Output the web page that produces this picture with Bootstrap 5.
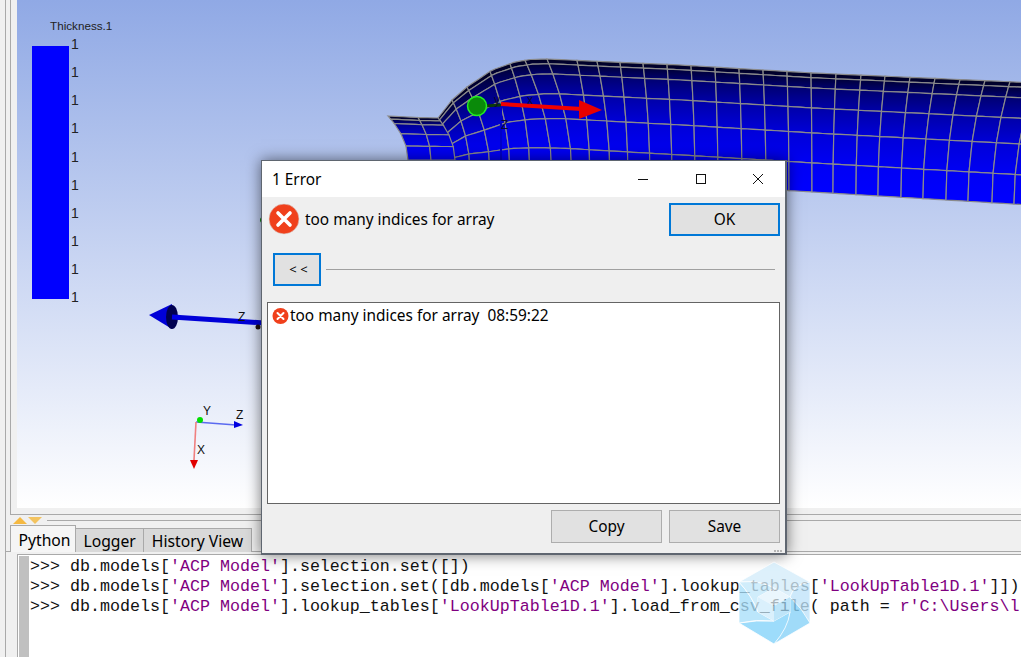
<!DOCTYPE html>
<html lang="en">
<head>
    <meta charset="UTF-8">
    <meta name="viewport" content="width=device-width, initial-scale=1.0">
    <title>1 Error</title>
    <link href="https://cdn.jsdelivr.net/npm/bootstrap@5.3.0/dist/css/bootstrap.min.css" rel="stylesheet">
    <style>
        html, body { height: 100%; overflow: hidden; }
        body {
            background-color: #f0f0f0;
            font-family: "Noto Sans", "Liberation Sans", sans-serif;
            font-size: 15.4px;
            color: #000;
            position: relative;
        }
        .app-shell { height: 657px; margin-left: 5px; border-left: 1px solid #a9a9a9; }
        .view-frame { margin-left: 4px; border-left: 1px solid #a9a9a9; border-bottom: 1px solid #a9a9a9; padding: 0 0 6px 6px; }
        .view-port {
            height: 508px;
            background: linear-gradient(to bottom, #90a9e5 0%, #ffffff 100%);
            overflow: hidden;
        }
        .view-port svg { display: block; }
        .split-row { height: 10px; padding-left: 7px; gap: 1px; }
        .split-line { height: 1px; background-color: #a9a9a9; margin-left: 4px; }
        .tri-up { width: 0; height: 0; border: 7px solid transparent; border-top: 0; border-bottom: 7px solid #f5b942; }
        .tri-down { width: 0; height: 0; border: 7px solid transparent; border-bottom: 0; border-top: 7px solid #f3c35f; }
        .tab-strip { height: 27px; padding-left: 4px; border-bottom: 1px solid #a9a9a9; margin-bottom: 2px; }
        .tab-item {
            border: 1px solid #a9a9a9;
            border-bottom: 0;
            background-color: #d9d9d9;
            padding: 0 7.5px;
            height: 24px;
            line-height: 24px;
            margin-top: 3px;
            font-size: 15.7px;
            white-space: nowrap;
        }
        .tab-item + .tab-item { border-left: 0; }
        .tab-item.tab-on { background-color: #f5f5f5; height: 27px; margin-top: 0; margin-bottom: -1px; line-height: 29px; position: relative; z-index: 1; width: 66px; }
        .console-box {
            height: 103px;
            margin-left: 11px;
            background-color: #fff;
            border-top: 1px solid #a9a9a9;
            border-left: 1px solid #a9a9a9;
            overflow: hidden;
        }
        .console-gutter { width: 10px; margin: 1px 1px 0 1px; background-color: #c0c0c0; flex: none; }
        .console-text {
            font-family: "Liberation Mono", monospace;
            font-size: 16.67px;
            line-height: 20px;
            white-space: pre;
            padding-top: 2px;
            color: #111;
        }
        .str-lit { color: #800080; }
        .err-dialog {
            position: absolute;
            left: 261px;
            top: 160px;
            width: 526px;
            height: 395px;
            background-color: #efefef;
            border: 2px solid #5f6670;
            border-top-width: 1px;
            border-left-width: 1px;
            box-shadow: 0 0 14px rgba(0, 0, 0, .55);
        }
        .err-title { height: 36px; background-color: #fff; padding: 1px 0 0 10px; }
        .win-btns { margin-right: -2px; margin-top: -1px; }
        .win-btn { width: 57.5px; height: 36px; }
        .err-head { height: 50px; padding: 6px 5px 0 6px; }
        .err-msg { margin-left: 5px; margin-top: 5px; }
        .err-btn {
            background-color: #e1e1e1;
            border: 1px solid #adadad;
            border-radius: 0;
            color: #000;
            font-size: 15.4px;
            width: 111px;
            height: 33px;
            padding: 0;
        }
        .err-btn.btn-focus { border: 2px solid #0078d7; }
        .err-btn.btn-less { width: 48px; font-size: 13px; padding: 1px 0 0 3px; }
        .err-rule { height: 1px; background-color: #a0a0a0; margin-left: 5px; margin-right: 5px; }
        .err-more { height: 33px; padding: 0 5px 0 11px; margin-top: 6px; }
        .err-list {
            height: 202px;
            margin: 16px 5px 0 5px;
            background-color: #fff;
            border: 1px solid #646464;
            padding: 1px 4px;
        }
        .err-list svg { margin-top: 3px; }
        .err-foot { padding: 6px 5px 0 0; gap: 7px; }
        .err-grip { position: absolute; right: 3px; bottom: 1px; width: 8px; height: 2px; background: repeating-linear-gradient(to right, #b5b5b5 0 2px, transparent 2px 3px); }
        .mark-over { position: absolute; left: 738px; top: 561px; pointer-events: none; }
    </style>
</head>
<body>
    <div class="app-shell d-flex flex-column">
        <div class="view-frame">
            <div class="view-port">
                <svg id="scene" width="1004" height="508" viewBox="17 0 1004 508" font-family="Liberation Sans, sans-serif">
                    <defs id="scene-defs"></defs>
                    <!-- legend -->
                    <text x="50" y="30" font-size="11.7" fill="#222">Thickness.1</text>
                    <rect x="32" y="46" width="37" height="253" fill="#0000ff"></rect>
                    <g id="legend-ticks" font-size="14" fill="#222"></g>
                    <!-- mesh goes in here -->
                    <g id="mesh"></g>
                    <!-- part triad -->
                    <line x1="501" y1="105" x2="501" y2="165" stroke="#0000c8" stroke-width="2"></line>
                    <line x1="484" y1="106" x2="501" y2="105" stroke="#0a3a0a" stroke-width="3"></line>
                    <line x1="501" y1="104" x2="582" y2="109" stroke="#f00000" stroke-width="4"></line>
                    <polygon points="579,100 602,110 579,119" fill="#e80000"></polygon>
                    <circle cx="477" cy="106" r="9.5" fill="#0a8a0a" stroke="#22ee22" stroke-width="1.5"></circle>
                    <g font-size="12" fill="#0a0a30">
                        <text x="494" y="104">y</text>
                        <text x="527" y="104">x</text>
                        <text x="501" y="129">Z</text>
                    </g>
                    <!-- big z arrow -->
                    <line x1="172" y1="317" x2="264" y2="323" stroke="#0000d8" stroke-width="5"></line>
                    <polygon points="149,315 172,304 172,329" fill="#0000d8"></polygon>
                    <ellipse cx="172" cy="317" rx="6" ry="12" fill="#000050"></ellipse>
                    <line x1="172" y1="317" x2="180" y2="317.5" stroke="#0000e8" stroke-width="5"></line>
                    <text x="238" y="321" font-size="12" fill="#111">Z</text>
                    <circle cx="258" cy="327" r="2.5" fill="#201010"></circle>
                    <circle cx="263" cy="220" r="3" fill="#0a8a0a"></circle>
                    <!-- corner triad -->
                    <line x1="196" y1="422" x2="236" y2="425" stroke="#5a6af0" stroke-width="1.6"></line>
                    <polygon points="234,421 243,425 234,428" fill="#0000e0"></polygon>
                    <line x1="196" y1="422" x2="194" y2="460" stroke="#f08080" stroke-width="1.6"></line>
                    <polygon points="190,460 198,460 194,469" fill="#e00000"></polygon>
                    <circle cx="200" cy="420" r="3" fill="#00e000"></circle>
                    <g font-size="12" fill="#111">
                        <text x="203" y="415">Y</text>
                        <text x="236" y="419">Z</text>
                        <text x="197" y="454">X</text>
                    </g>
                </svg>
            </div>
        </div>

        <div class="split-row d-flex align-items-center">
            <div class="tri-up"></div>
            <div class="tri-down"></div>
            <div class="split-line flex-grow-1"></div>
        </div>

        <div class="tab-strip d-flex">
            <div class="tab-item tab-on">Python</div>
            <div class="tab-item">Logger</div>
            <div class="tab-item">History View</div>
        </div>

        <div class="console-box d-flex flex-grow-1">
            <div class="console-gutter"></div>
            <div class="console-text">&gt;&gt;&gt; db.models[<span class="str-lit">'ACP Model'</span>].selection.set([])
&gt;&gt;&gt; db.models[<span class="str-lit">'ACP Model'</span>].selection.set([db.models[<span class="str-lit">'ACP Model'</span>].lookup_tables[<span class="str-lit">'LookUpTable1D.1'</span>]])
&gt;&gt;&gt; db.models[<span class="str-lit">'ACP Model'</span>].lookup_tables[<span class="str-lit">'LookUpTable1D.1'</span>].load_from_csv_file( path = <span class="str-lit">r'C:\Users\l</span></div>
        </div>
    </div>

    <!-- error dialog -->
    <div class="err-dialog">
        <div class="err-title d-flex align-items-center justify-content-between">
            <span>1 Error</span>
            <div class="win-btns d-flex">
                <div class="win-btn d-flex align-items-center justify-content-center">
                    <svg width="12" height="12" viewBox="0 0 12 12"><line x1="1" y1="6.5" x2="11" y2="6.5" stroke="#111" stroke-width="1"></line></svg>
                </div>
                <div class="win-btn d-flex align-items-center justify-content-center">
                    <svg width="12" height="12" viewBox="0 0 12 12"><rect x="1.5" y="1.5" width="9" height="9" fill="none" stroke="#111" stroke-width="1"></rect></svg>
                </div>
                <div class="win-btn d-flex align-items-center justify-content-center">
                    <svg width="12" height="12" viewBox="0 0 12 12"><path d="M1 1 L11 11 M11 1 L1 11" stroke="#111" stroke-width="1"></path></svg>
                </div>
            </div>
        </div>

        <div class="err-head d-flex align-items-start">
            <svg width="32" height="32" viewBox="0 0 32 32">
                <circle cx="16" cy="16" r="15" fill="#f0401c" stroke="#d8d0cc" stroke-width=".6"></circle>
                <path d="M10 10 L22 22 M22 10 L10 22" stroke="#fff" stroke-width="3.6" stroke-linecap="round"></path>
            </svg>
            <span class="err-msg flex-grow-1">too many indices for array</span>
            <button class="btn err-btn btn-focus">OK</button>
        </div>

        <div class="err-more d-flex align-items-center">
            <button class="btn err-btn btn-less btn-focus">&lt; &lt;</button>
            <div class="err-rule flex-grow-1"></div>
        </div>

        <div class="err-list d-flex align-items-start">
            <svg width="18" height="18" viewBox="0 0 18 18">
                <circle cx="8.5" cy="9" r="8" fill="#f0401c"></circle>
                <path d="M5.5 6 L11.5 12 M11.5 6 L5.5 12" stroke="#fff" stroke-width="2" stroke-linecap="round"></path>
            </svg>
            <span>too many indices for array&nbsp; 08:59:22</span>
        </div>

        <div class="err-foot d-flex justify-content-end">
            <button class="btn err-btn">Copy</button>
            <button class="btn err-btn">Save</button>
        </div>
        <div class="err-grip"></div>
    </div>

    <!-- watermark -->
    <svg class="mark-over" width="74" height="84" viewBox="738 561 74 84">
        <g stroke="#ffffff" stroke-width=".8" opacity=".78">
            <path d="M774 562 L810 582 Q794 584 790 597 L774 588 Q760 580 739 582 Z" fill="#d4edfb"></path>
            <path d="M810 582 L810 623 Q798 604 790 597 Q794 584 810 582 Z" fill="#bfe4fa"></path>
            <path d="M810 623 L774 644 Q786 628 790 612 L790 597 Q802 608 810 623 Z" fill="#86d1f8"></path>
            <path d="M774 644 L739 623 Q756 620 774 621 L790 612 Q788 628 774 644 Z" fill="#82d3fb"></path>
            <path d="M739 623 L739 582 Q752 596 758 612 L774 621 Q756 619 739 623 Z" fill="#a9dffb"></path>
            <path d="M739 582 Q760 580 774 588 L758 597 L758 612 Q752 596 739 582 Z" fill="#c4e8fb"></path>
        </g>
        <g opacity=".72">
            <polygon points="774,588 790,597 774,606 758,597" fill="#e3f3fd"></polygon>
            <polygon points="758,597 774,606 774,621 758,612" fill="#cdebfc"></polygon>
            <polygon points="790,597 774,606 774,621 790,612" fill="#a6dcf8"></polygon>
        </g>
    </svg>

    <script>
        const svgNs = 'http://www.w3.org/2000/svg';
        const mesh = document.getElementById('mesh');
        const defs = document.getElementById('scene-defs');
        const lineColor = '#8a8a8a';

        function el(name, attrs, parent) {
            const node = document.createElementNS(svgNs, name);
            Object.keys(attrs).forEach(k => node.setAttribute(k, attrs[k]));
            parent.appendChild(node);
            return node;
        }

        function rowGradient(id, from, to) {
            const g = el('linearGradient', { id: id, x1: 0, y1: 0, x2: 0, y2: 1 }, defs);
            el('stop', { offset: '0%', 'stop-color': from }, g);
            el('stop', { offset: '100%', 'stop-color': to }, g);
        }

        // legend numbers
        [44, 72, 100, 128, 157, 185, 213, 241, 269, 297].forEach(y => {
            const t = el('text', { x: 71, y: y + 5 }, document.getElementById('legend-ticks'));
            t.textContent = '1';
        });

        // top edge of the tube, then top and bottom x for each station
        const topEdge = [[438, 118], [452, 100], [467, 87], [492, 70], [515, 62], [530, 59.5], [547, 59], [613, 62], [680, 65], [813, 73], [1060, 84]];
        const topX = [438, 452, 467, 490, 510, 525, 547, 577, 597, 620, 643, 667, 691, 715, 739, 763, 787, 811, 836, 861, 885, 910, 935, 960, 985, 1010, 1035, 1060];
        const botX = [455, 470, 490, 510, 530, 552, 572, 590, 610, 628, 650, 672, 695, 718, 742, 766, 789, 812, 833, 856, 878, 901, 923, 946, 968, 992, 1014, 1036];
        const rows = [0, .04, .126, .294, .504, .756, 1];
        const rowColors = ['#000020', '#000038', '#000070', '#0000a8', '#0000d8', '#0000f4', '#0000ff'];

        function topY(x) {
            for (let i = 0; i < topEdge.length - 1; i++) {
                const a = topEdge[i], b = topEdge[i + 1];
                if (x <= b[0]) return a[1] + (b[1] - a[1]) * (x - a[0]) / (b[0] - a[0]);
            }
            return 84;
        }

        function tubePoint(s, r) {
            const i = Math.min(Math.floor(s), topX.length - 2);
            const f = s - i;
            const xT = topX[i] + (topX[i + 1] - topX[i]) * f;
            const xB = botX[i] + (botX[i + 1] - botX[i]) * f;
            const yT = topY(xT);
            const yB = 192 + (xB - 813) * 0.06;
            const ease = 1 - Math.pow(1 - r, 2);
            return [xT + (xB - xT) * ease, yT + (yB - yT) * r];
        }

        function drawGrid(count, rowList, colors, pointAt, idPrefix) {
            for (let j = 0; j < rowList.length - 1; j++) {
                rowGradient(idPrefix + j, colors[j], colors[j + 1]);
            }
            for (let s = 0; s < count - 1; s++) {
                for (let j = 0; j < rowList.length - 1; j++) {
                    const pts = [];
                    // 4 steps along the station so the curve stays smooth
                    for (let k = 0; k <= 4; k++) pts.push(pointAt(s + k / 4, rowList[j]));
                    for (let k = 4; k >= 0; k--) pts.push(pointAt(s + k / 4, rowList[j + 1]));
                    el('polygon', {
                        points: pts.map(p => p.join(',')).join(' '),
                        fill: 'url(#' + idPrefix + j + ')',
                        stroke: lineColor,
                        'stroke-width': 1.2
                    }, mesh);
                }
            }
        }

        // flange on the left of the tube
        const flangeTop = [[388, 116], [418, 117.5], [438, 118]];
        const flangeBot = [[408, 160], [431, 160], [455, 160]];
        function flangePoint(s, r) {
            const i = Math.min(Math.floor(s), 1);
            const f = s - i;
            const xT = flangeTop[i][0] + (flangeTop[i + 1][0] - flangeTop[i][0]) * f;
            const yT = flangeTop[i][1] + (flangeTop[i + 1][1] - flangeTop[i][1]) * f;
            const xB = flangeBot[i][0] + (flangeBot[i + 1][0] - flangeBot[i][0]) * f;
            const ease = 1 - Math.pow(1 - r, 2);
            return [xT + (xB - xT) * ease, yT + (160 - yT) * r];
        }

        drawGrid(topX.length, rows, rowColors, tubePoint, 'row');
        drawGrid(3, [0, .07, .17, .4, .68, 1], ['#000020', '#000040', '#000090', '#0000c8', '#0000ee', '#0000ff'], flangePoint, 'fl');
    </script>

    <script src="https://cdn.jsdelivr.net/npm/bootstrap@5.3.0/dist/js/bootstrap.bundle.min.js"></script>
</body>
</html>
